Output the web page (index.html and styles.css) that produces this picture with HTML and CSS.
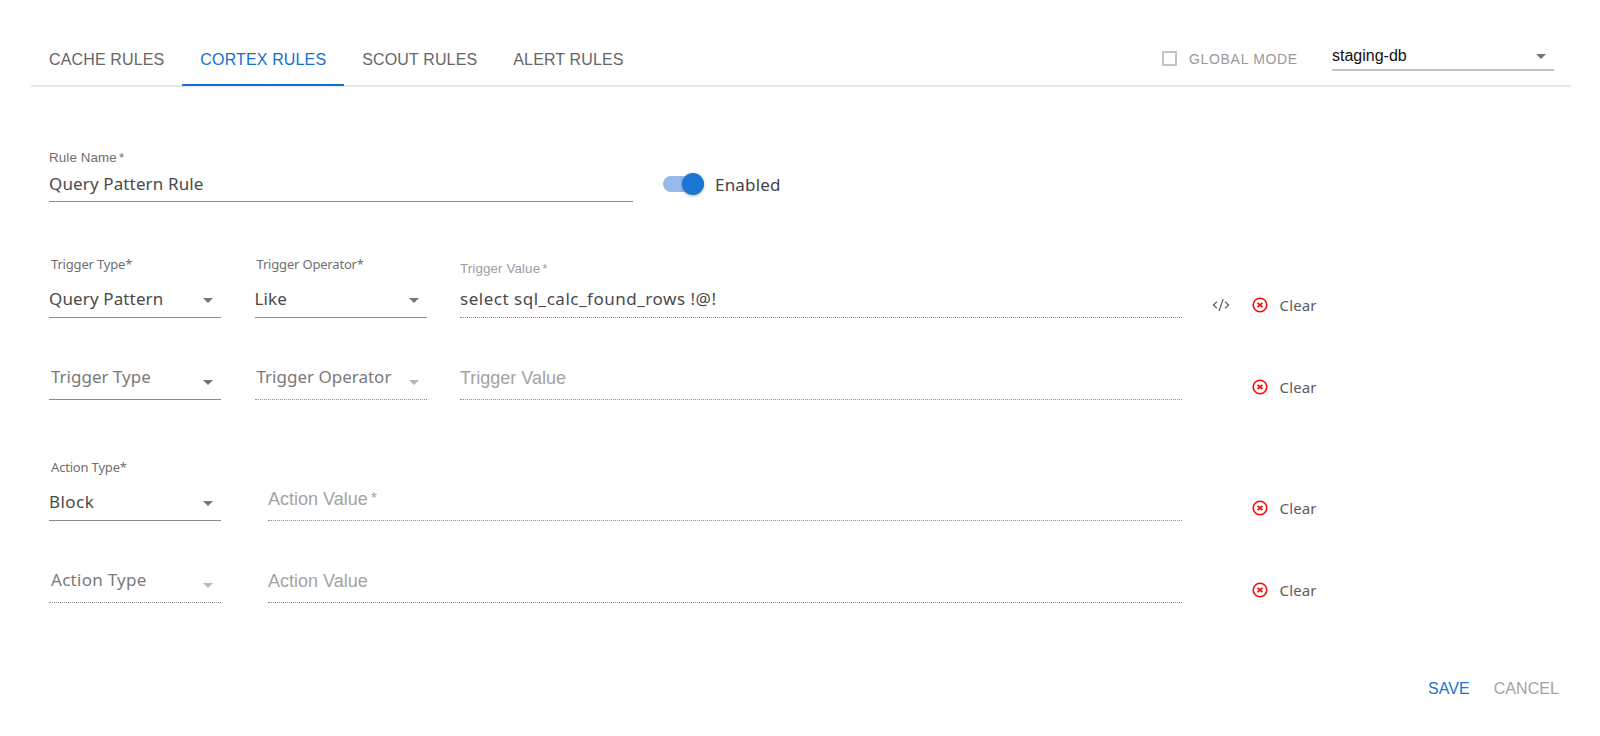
FILE: index.html
```html
<!DOCTYPE html>
<html lang="en">
<head>
<meta charset="utf-8">
<title>Cortex Rules</title>
<link rel="stylesheet" href="styles.css">
</head>
<body>
<svg class="defs" width="0" height="0">
  <symbol id="clear" viewBox="0 0 16 16"><circle cx="8" cy="8" r="6.8" fill="none" stroke="#ff0a0a" stroke-width="1.6"/><path d="M5.6 5.8 10.4 10.2M10.4 5.8 5.6 10.2" stroke="#ff0a0a" stroke-width="1.8"/></symbol>
  <symbol id="code" viewBox="0 0 18 14"><path d="M5 3.8 1.4 7 5 10.2M13 3.8 16.6 7 13 10.2M11.2 1 7 13" fill="none" stroke="#666" stroke-width="1.3"/></symbol>
</svg>
<header class="header">
  <nav class="tabs">
    <a class="tab">CACHE RULES</a>
    <a class="tab active">CORTEX RULES</a>
    <a class="tab">SCOUT RULES</a>
    <a class="tab">ALERT RULES</a>
  </nav>
  <div class="tools">
    <span class="checkbox"></span>
    <span class="mode">GLOBAL MODE</span>
    <div class="db"><span>staging-db</span><i class="caret"></i></div>
  </div>
</header>
<main class="form">
  <div class="row name-row">
    <div class="field name"><label class="label sans">Rule Name<span class="star">*</span></label><div class="value">Query Pattern Rule</div></div>
    <div class="toggle"><span class="switch"><span class="thumb"></span></span><span class="enabled">Enabled</span></div>
  </div>
  <div class="row trigger">
    <div class="field select"><label class="label">Trigger Type*</label><div class="value"><span>Query Pattern</span><i class="caret"></i></div></div>
    <div class="field select"><label class="label">Trigger Operator*</label><div class="value"><span>Like</span><i class="caret"></i></div></div>
    <div class="field text off"><label class="label sans low">Trigger Value<span class="star">*</span></label><div class="value query">select sql_calc_found_rows !@!</div></div>
    <div class="actions"><svg class="code"><use href="#code"/></svg><svg class="x"><use href="#clear"/></svg><span>Clear</span></div>
  </div>
  <div class="row trigger empty">
    <div class="field select"><div class="hint"><span>Trigger Type</span><i class="caret"></i></div></div>
    <div class="field select off"><div class="hint"><span>Trigger Operator</span><i class="caret"></i></div></div>
    <div class="field text off"><div class="hint sans">Trigger Value</div></div>
    <div class="actions"><svg class="x"><use href="#clear"/></svg><span>Clear</span></div>
  </div>
  <div class="row action">
    <div class="field select"><label class="label">Action Type*</label><div class="value"><span class="block">Block</span><i class="caret"></i></div></div>
    <div class="field text off wide"><div class="hint sans">Action Value<span class="star">*</span></div></div>
    <div class="actions"><svg class="x"><use href="#clear"/></svg><span>Clear</span></div>
  </div>
  <div class="row action empty">
    <div class="field select off"><div class="hint"><span class="action-hint">Action Type</span><i class="caret"></i></div></div>
    <div class="field text off wide"><div class="hint sans">Action Value</div></div>
    <div class="actions"><svg class="x"><use href="#clear"/></svg><span>Clear</span></div>
  </div>
</main>
<footer class="footer"><button class="save">SAVE</button><button class="cancel">CANCEL</button></footer>
</body>
</html>
```
FILE: styles.css
```css
* { box-sizing: border-box; }
body { margin: 0; padding: 32px 29px 0 31px; height: 736px; overflow: hidden; background: #fff; font-family: "Noto Sans", sans-serif; color: #444; }
.defs { display: block; height: 0; }
.header { display: flex; justify-content: space-between; height: 55px; border-bottom: 2px solid #e6e6e6; font: 16px "Liberation Sans", Arial, sans-serif; }
.tabs { display: flex; height: 54px; }
.tab { padding: 1px 18px 0; line-height: 54px; height: 54px; letter-spacing: .14px; color: #666; }
.tab.active { color: #1670d2; border-bottom: 2px solid #1670d2; }
.tools { display: flex; padding-right: 17px; }
.checkbox { width: 15px; height: 15px; margin: 19px 12px 0 0; border: 2px solid #c4c4c4; border-radius: 1px; }
.mode { width: 143px; line-height: 54px; font-size: 14px; letter-spacing: .68px; color: #999; }
.db { display: flex; justify-content: space-between; width: 222px; height: 39px; padding: 15px 8px 0 0; line-height: 18px; border-bottom: 2px solid #c4c4c4; color: #111; }
.caret { width: 0; height: 0; border: 5.5px solid transparent; border-top-color: #757575; border-bottom: 0; }
.db .caret { margin-top: 7px; }
.form { padding-left: 18px; }
.row { display: flex; }
.name-row { height: 54px; margin-top: 61px; }
.field { display: flex; flex-direction: column; justify-content: space-between; border-bottom: 1px solid #8b8b8b; }
.field.off { border-bottom-style: dotted; }
.name { width: 584px; }
.label { padding-left: 2px; font-size: 13px; line-height: 18px; letter-spacing: -.18px; color: #707070; }
.sans { font-family: "Liberation Sans", Arial, sans-serif; }
.label.sans { padding: 1px 0 0; font-size: 13.4px; letter-spacing: .1px; }
.off .label.sans { color: #9e9e9e; }
.label.sans.low { padding-top: 5px; }
.star { padding-left: 2px; }
.value { display: flex; justify-content: space-between; padding-bottom: 5px; font-size: 17px; line-height: 24px; letter-spacing: .13px; color: #4a4a4a; }
.trigger .value, .action .value { padding-bottom: 6px; }
.value.query { letter-spacing: .52px; }
.block { letter-spacing: .45px; }
.toggle { display: flex; align-items: center; height: 24px; margin: 24px 0 0 30px; }
.switch { display: flex; align-items: center; justify-content: flex-end; width: 41px; height: 16px; border-radius: 8px; background: #94b9ea; }
.thumb { width: 22px; height: 22px; border-radius: 50%; background: #1976d2; box-shadow: 0 1px 3px rgba(0,0,0,.3); }
.enabled { margin-left: 11px; font-size: 17px; letter-spacing: .2px; }
.trigger, .action { height: 63px; margin-top: 53px; }
.trigger.empty, .action.empty { height: 42px; margin-top: 40px; }
.action:not(.empty) { margin-top: 58px; }
.select { width: 172px; margin-right: 33.5px; }
.text { width: 722px; }
.wide { width: 914px; margin-left: 13.5px; }
.select .caret { margin: 10px 8px 0 0; }
.select .value .caret { margin-top: 11px; }
.hint { display: flex; justify-content: space-between; margin-top: auto; padding: 0 0 10px 2px; font-size: 17px; line-height: 24px; color: #7a7a7a; }
.action-hint { letter-spacing: .27px; }
.select .hint .caret { margin-top: 15px; }
.off .hint .caret { border-top-color: #b8b8b8; }
.hint.sans { justify-content: flex-start; padding: 0 0 9px; font-size: 18px; color: #a3a3a3; }
.hint .star { padding-left: 3px; font-size: 16px; }
.actions { display: flex; align-items: center; justify-content: flex-end; align-self: flex-end; width: 134.5px; height: 24px; margin-bottom: 1px; font-size: 15px; letter-spacing: .1px; color: #5c5c5c; }
.x { width: 16px; height: 16px; margin-right: 12px; }
.code { width: 18px; height: 14px; margin-right: 22px; }
.footer { display: flex; justify-content: flex-end; gap: 24px; margin-top: 76px; padding-right: 12px; }
.footer button { border: 0; padding: 0; background: none; font: 16px/20px "Liberation Sans", Arial, sans-serif; letter-spacing: .06px; }
.footer .save { color: #1976d2; }
.footer .cancel { color: #a3a3a3; }
```
